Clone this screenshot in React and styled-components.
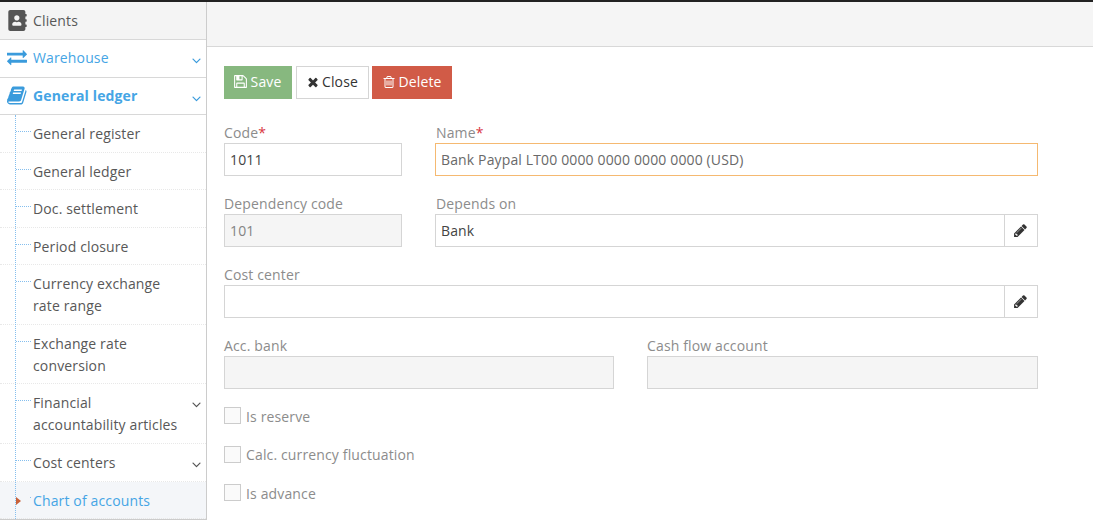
import styled, { createGlobalStyle } from 'styled-components';
import { FaAddressBook } from 'react-icons/fa';

const GlobalStyle = createGlobalStyle`
  html, body {
    margin: 0;
    padding: 0;
    height: 520px;
    overflow: hidden;
    background: #fff;
  }
  * {
    box-sizing: border-box;
  }
`;

// Font Awesome 4 outlines, the 5.x set in react-icons draws these differently
const icons = {
  book: 'M1639 478q40 57 18 129l-275 906q-19 64-76.5 107.5t-122.5 43.5h-923q-77 0-148.5-53.5t-99.5-131.5q-24-67-2-127 0-4 3-27t4-37q1-8-3-21.5t-3-19.5q2-11 8-21t16.5-23.5 16.5-23.5q23-38 45-91.5t30-91.5q3-10 .5-30t-.5-28q3-11 17-28t17-23q21-36 42-92t25-90q1-9-2.5-32t.5-28q4-13 22-30.5t22-22.5q19-26 42.5-84.5t27.5-96.5q1-8-3-25.5t-2-26.5q2-8 9-18t18-23 17-21q8-12 16.5-30.5t15-35 16-36 19.5-32 26.5-23.5 36-11.5 47.5 5.5l-1 3q38-9 51-9h761q74 0 114 56t18 130l-274 906q-36 119-71.5 153.5t-128.5 34.5h-869q-27 0-38 15-11 16-1 43 24 70 144 70h923q29 0 56-15.5t35-41.5l300-987q7-22 5-57 38 15 59 43zm-1064 2q-4 13 2 22.5t20 9.5h608q13 0 25.5-9.5t16.5-22.5l21-64q4-13-2-22.5t-20-9.5h-608q-13 0-25.5 9.5t-16.5 22.5zm-83 256q-4 13 2 22.5t20 9.5h608q13 0 25.5-9.5t16.5-22.5l21-64q4-13-2-22.5t-20-9.5h-608q-13 0-25.5 9.5t-16.5 22.5z',
  exchange: 'M1792 1184v192q0 13-9.5 22.5t-22.5 9.5h-1376v192q0 13-9.5 22.5t-22.5 9.5q-12 0-24-10l-319-320q-9-9-9-22 0-14 9-23l320-320q9-9 23-9 13 0 22.5 9.5t9.5 22.5v192h1376q13 0 22.5 9.5t9.5 22.5zm0-544q0 14-9 23l-320 320q-9 9-23 9-13 0-22.5-9.5t-9.5-22.5v-192h-1376q-13 0-22.5-9.5t-9.5-22.5v-192q0-13 9.5-22.5t22.5-9.5h1376v-192q0-14 9-23t23-9q12 0 24 10l319 319q9 9 9 23z',
  times: 'M1490 1322q0 40-28 68l-136 136q-28 28-68 28t-68-28l-294-294-294 294q-28 28-68 28t-68-28l-136-136q-28-28-28-68t28-68l294-294-294-294q-28-28-28-68t28-68l136-136q28-28 68-28t68 28l294 294 294-294q28-28 68-28t68 28l136 136q28 28 28 68t-28 68l-294 294 294 294q28 28 28 68z',
  save: 'M512 1536h768v-384h-768v384zm896 0h128v-896q0-14-10-38.5t-20-34.5l-281-281q-10-10-34-20t-39-10v416q0 40-28 68t-68 28h-576q-40 0-68-28t-28-68v-416h-128v1280h128v-416q0-40 28-68t68-28h832q40 0 68 28t28 68v416zm-384-928v-320q0-13-9.5-22.5t-22.5-9.5h-192q-13 0-22.5 9.5t-9.5 22.5v320q0 13 9.5 22.5t22.5 9.5h192q13 0 22.5-9.5t9.5-22.5zm640 32v928q0 40-28 68t-68 28h-1344q-40 0-68-28t-28-68v-1344q0-40 28-68t68-28h928q40 0 88 20t76 48l280 280q28 28 48 76t20 88z',
  trash: 'M704 736v576q0 14-9 23t-23 9h-64q-14 0-23-9t-9-23v-576q0-14 9-23t23-9h64q14 0 23 9t9 23zm256 0v576q0 14-9 23t-23 9h-64q-14 0-23-9t-9-23v-576q0-14 9-23t23-9h64q14 0 23 9t9 23zm256 0v576q0 14-9 23t-23 9h-64q-14 0-23-9t-9-23v-576q0-14 9-23t23-9h64q14 0 23 9t9 23zm128 724v-948h-896v948q0 22 7 40.5t14.5 27 10.5 8.5h832q3 0 10.5-8.5t14.5-27 7-40.5zm-672-1076h448l-48-117q-7-9-17-11h-317q-10 2-17 11zm928 32v64q0 14-9 23t-23 9h-96v948q0 83-47 143.5t-113 60.5h-832q-66 0-113-58.5t-47-141.5v-952h-96q-14 0-23-9t-9-23v-64q0-14 9-23t23-9h309l70-167q15-37 54-63t79-26h320q40 0 79 26t54 63l70 167h309q14 0 23 9t9 23z',
  pencil: 'M491 1536l91-91-235-235-91 91v107h128v128h107zm523-928q0-22-22-22-10 0-17 7l-542 542q-7 7-7 17 0 22 22 22 10 0 17-7l542-542q7-7 7-17zm-54-192l416 416-832 832h-416v-416zm683 96q0 53-37 90l-166 166-416-416 166-165q36-38 90-38 53 0 91 38l235 234q37 39 37 91z',
  angleDown: 'M1395 736q0 13-10 23l-466 466q-10 10-23 10t-23-10l-466-466q-10-10-10-23t10-23l50-50q10-10 23-10t23 10l393 393 393-393q10-10 23-10t23 10l50 50q10 10 10 23z',
};

function Icon({ name, size }) {
  return (
    <Glyph viewBox="0 0 1792 1792" $size={size}>
      <path d={icons[name]} />
    </Glyph>
  );
}

const subItems = [
  { label: ['General register'] },
  { label: ['General ledger'] },
  { label: ['Doc. settlement'] },
  { label: ['Period closure'] },
  { label: ['Currency exchange', 'rate range'] },
  { label: ['Exchange rate', 'conversion'] },
  { label: ['Financial', 'accountability articles'], arrow: true },
  { label: ['Cost centers'], arrow: true },
  { label: ['Chart of accounts'], active: true },
];

export default function App() {
  return (
    <Page>
      <GlobalStyle />
      <Sidebar>
        <TopItem $grey>
          <ClientsIcon>
            <FaAddressBook />
          </ClientsIcon>
          Clients
        </TopItem>
        <TopItem $blue>
          <BlueIcon>
            <Icon name="exchange" size={20} />
          </BlueIcon>
          Warehouse
          <Arrow $blue>
            <Icon name="angleDown" size={15} />
          </Arrow>
        </TopItem>
        <TopItem $blue $bold $last>
          <BlueIcon>
            <Icon name="book" size={21} />
          </BlueIcon>
          General ledger
          <Arrow $blue>
            <Icon name="angleDown" size={15} />
          </Arrow>
        </TopItem>
        <SubMenu>
          {subItems.map((item) => (
            <SubItem key={item.label[0]} $active={item.active}>
              {item.active ? <ActiveMark /> : <Tick />}
              <SubLabel>
                {item.label.map((line) => (
                  <div key={line}>{line}</div>
                ))}
              </SubLabel>
              {item.arrow && (
                <Arrow>
                  <Icon name="angleDown" size={15} />
                </Arrow>
              )}
            </SubItem>
          ))}
        </SubMenu>
      </Sidebar>
      <Main>
        <TopBar />
        <Content>
          <Toolbar>
            <Button $bg="#87b87f" $color="#fff" $border="#87b87f" $width={68} $gap={3} $shift={2}>
              <Icon name="save" size={15} /> Save
            </Button>
            <Button $bg="#fff" $color="#333" $border="#d5d5d5" $width={73}>
              <Icon name="times" size={14} /> Close
            </Button>
            <Button $bg="#d15b47" $color="#fff" $border="#d15b47" $width={80}>
              <Icon name="trash" size={14} /> Delete
            </Button>
          </Toolbar>
          <Row $columns="178px 603px">
            <Field>
              <Label>
                Code<Required>*</Required>
              </Label>
              <Input>1011</Input>
            </Field>
            <Field>
              <Label $nudge>
                Name<Required>*</Required>
              </Label>
              <Input $focus>Bank Paypal LT00 0000 0000 0000 0000 (USD)</Input>
            </Field>
          </Row>
          <Row $columns="178px 603px">
            <Field>
              <Label>Dependency code</Label>
              <Input $disabled>101</Input>
            </Field>
            <Field>
              <Label $nudge>Depends on</Label>
              <InputGroup>
                <GroupInput>Bank</GroupInput>
                <EditButton>
                  <Icon name="pencil" size={15} />
                </EditButton>
              </InputGroup>
            </Field>
          </Row>
          <Row $columns="814px">
            <Field>
              <Label>Cost center</Label>
              <InputGroup>
                <GroupInput />
                <EditButton>
                  <Icon name="pencil" size={15} />
                </EditButton>
              </InputGroup>
            </Field>
          </Row>
          <Row $columns="390px 391px">
            <Field>
              <Label>Acc. bank</Label>
              <Input $disabled />
            </Field>
            <Field>
              <Label>Cash flow account</Label>
              <Input $disabled />
            </Field>
          </Row>
          <Checks>
            <Check>
              <Box /> Is reserve
            </Check>
            <Check>
              <Box /> Calc. currency fluctuation
            </Check>
            <Check>
              <Box /> Is advance
            </Check>
          </Checks>
        </Content>
      </Main>
    </Page>
  );
}

const Page = styled.div`
  display: flex;
  width: 1093px;
  height: 520px;
  border-top: 2px solid #222;
  overflow: hidden;
  font-family: 'Open Sans', sans-serif;
  font-size: 14px;
  letter-spacing: 0.14px;
  color: #585858;
`;

const Glyph = styled.svg`
  display: block;
  flex-shrink: 0;
  width: ${(p) => p.$size}px;
  height: ${(p) => p.$size}px;
  fill: currentColor;
`;

const Sidebar = styled.div`
  width: 207px;
  height: 518px;
  flex-shrink: 0;
  background: #fff;
  border-right: 1px solid #ccc;
  border-bottom: 1px solid #ccc;
`;

const TopItem = styled.div`
  position: relative;
  display: flex;
  align-items: center;
  height: ${(p) => (p.$last ? 37 : 38)}px;
  padding-left: 7px;
  padding-bottom: ${(p) => (p.$grey ? 1 : p.$last ? 2 : 3)}px;
  border-bottom: 1px solid #d8d8d8;
  background: ${(p) => (p.$grey ? '#f4f4f4' : '#fff')};
  color: ${(p) => (p.$blue ? '#45a5e5' : '#585858')};
  font-weight: ${(p) => (p.$bold ? 700 : 400)};
`;

const ClientsIcon = styled.span`
  display: flex;
  width: 26px;
  font-size: 21px;
  color: #555;
`;

const BlueIcon = styled.span`
  display: flex;
  width: 26px;
  color: #3a9bdc;
`;

const Arrow = styled.span`
  position: absolute;
  right: 2.5px;
  top: 13px;
  display: flex;
  color: ${(p) => (p.$blue ? '#3a9bdc' : '#555')};
`;

const SubMenu = styled.div`
  position: relative;
  &::before {
    content: '';
    position: absolute;
    left: 15px;
    top: 0;
    bottom: 0;
    z-index: 1;
    border-left: 1px dotted #85bfee;
  }
`;

const SubItem = styled.div`
  position: relative;
  display: flex;
  align-items: center;
  padding: 8px 0 6.57px 33px;
  line-height: 22px;
  border-bottom: 1px dotted #e8e8e8;
  background: ${(p) => (p.$active ? '#f4f6f9' : '#fff')};
  color: ${(p) => (p.$active ? '#45a5e5' : '#585858')};
`;

const SubLabel = styled.div`
  flex: 1;
`;

const Tick = styled.span`
  position: absolute;
  left: 16px;
  top: 16px;
  width: 15px;
  border-top: 1px dotted #85bfee;
`;

const ActiveMark = styled.span`
  position: absolute;
  left: 16px;
  top: 15px;
  width: 0;
  height: 0;
  border-left: 5px solid #c86139;
  border-top: 4px solid transparent;
  border-bottom: 4px solid transparent;
  &::after {
    content: '';
    position: absolute;
    left: 9px;
    top: -4px;
    width: 1px;
    height: 1px;
    background: #85bfee;
  }
`;

const Main = styled.div`
  flex: 1;
  display: flex;
  flex-direction: column;
`;

const TopBar = styled.div`
  height: 45px;
  flex-shrink: 0;
  background: #f5f5f5;
  border-bottom: 1px solid #d8d8d8;
`;

const Content = styled.div`
  padding: 19px 0 0 17px;
`;

const Toolbar = styled.div`
  display: flex;
  gap: 3.5px;
  margin-bottom: 24px;
`;

const Button = styled.button`
  display: inline-flex;
  align-items: center;
  justify-content: center;
  gap: ${(p) => p.$gap || 2}px;
  width: ${(p) => p.$width}px;
  height: 33px;
  padding: 0 ${(p) => p.$shift || 0}px 2px 0;
  border: 1px solid ${(p) => p.$border};
  background: ${(p) => p.$bg};
  color: ${(p) => p.$color};
  font-family: inherit;
  font-size: 14px;
  letter-spacing: inherit;
`;

const Row = styled.div`
  display: grid;
  grid-template-columns: ${(p) => p.$columns};
  column-gap: 33px;
  margin-bottom: 18px;
`;

const Field = styled.div`
  display: flex;
  flex-direction: column;
  min-width: 0;
`;

const Label = styled.label`
  height: 20px;
  line-height: 20px;
  padding-left: ${(p) => (p.$nudge ? 1 : 0)}px;
  color: #8c8c8c;
`;

const Required = styled.span`
  color: #d9363e;
`;

const Input = styled.div`
  min-width: 0;
  height: 33px;
  padding: 0 5px;
  line-height: 31px;
  border: 1px solid ${(p) => (p.$focus ? '#f5b971' : '#d5d5d5')};
  background: ${(p) => (p.$disabled ? '#f5f5f5' : '#fff')};
  color: ${(p) => (p.$disabled ? '#848484' : p.$focus ? '#696969' : '#444')};
`;

const GroupInput = styled(Input)`
  flex: 1;
`;

const InputGroup = styled.div`
  display: flex;
`;

const EditButton = styled.span`
  display: flex;
  align-items: center;
  justify-content: center;
  width: 33px;
  height: 33px;
  padding-right: 2px;
  flex-shrink: 0;
  border: 1px solid #d5d5d5;
  border-left: none;
  color: #333;
`;

const Checks = styled.div`
  display: flex;
  flex-direction: column;
  gap: 20.5px;
  margin-top: 1px;
`;

const Check = styled.div`
  display: flex;
  align-items: center;
  gap: 5px;
  height: 18px;
  color: #8c8c8c;
`;

const Box = styled.span`
  align-self: flex-start;
  width: 17px;
  height: 17px;
  border: 1px solid #ccc;
  background: #fafafa;
`;
